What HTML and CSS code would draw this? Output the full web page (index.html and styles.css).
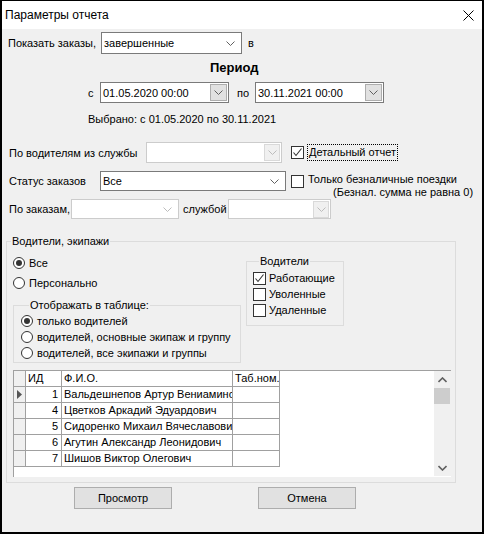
FILE: index.html
```html
<!DOCTYPE html>
<html lang="ru">
<head>
    <meta charset="UTF-8">
    <title>Параметры отчета</title>
    <link rel="stylesheet" href="styles.css">
</head>
<body>

<div class="window">
    <div class="titlebar">
        <span>Параметры отчета</span>
        <svg class="close" width="11" height="11" viewBox="0 0 11 11">
            <path d="M0.5 0.5 L10.5 10.5 M10.5 0.5 L0.5 10.5" stroke="#000" stroke-width="1"/>
        </svg>
    </div>

    <div class="content">
        <div class="row row-show">
            <span class="lbl w-show">Показать заказы,</span>
            <div class="combo w-status-main">
                <span>завершенные</span>
                <svg class="chev" width="9" height="5" viewBox="0 0 9 5"><path d="M0.5 0.5 L4.5 4.5 L8.5 0.5" fill="none" stroke="#606060"/></svg>
            </div>
            <span class="lbl after-combo">в</span>
        </div>

        <div class="period-title">Период</div>

        <div class="row row-dates">
            <span class="lbl w-from">с</span>
            <div class="datepick">
                <span>01.05.2020 00:00</span>
                <span class="dbtn"><svg width="9" height="5" viewBox="0 0 9 5"><path d="M0.5 0.5 L4.5 4.5 L8.5 0.5" fill="none" stroke="#606060"/></svg></span>
            </div>
            <span class="lbl w-to">по</span>
            <div class="datepick">
                <span>30.11.2021 00:00</span>
                <span class="dbtn"><svg width="9" height="5" viewBox="0 0 9 5"><path d="M0.5 0.5 L4.5 4.5 L8.5 0.5" fill="none" stroke="#606060"/></svg></span>
            </div>
        </div>

        <div class="selected">Выбрано: с 01.05.2020 по 30.11.2021</div>

        <div class="row row-f1">
            <span class="lbl w-drivers">По водителям из службы</span>
            <div class="combo disabled w-service">
                <span></span>
                <span class="dbtn dis"><svg width="9" height="5" viewBox="0 0 9 5"><path d="M0.5 0.5 L4.5 4.5 L8.5 0.5" fill="none" stroke="#bcbcbc"/></svg></span>
            </div>
            <div class="check detail">
                <span class="box"><svg width="11" height="11" viewBox="0 0 11 11"><path d="M1.5 5.5 L4 8.5 L9.5 1.5" fill="none" stroke="#333" stroke-width="1.1"/></svg></span>
                <span class="focus">Детальный отчет</span>
            </div>
        </div>

        <div class="row row-f2">
            <span class="lbl w-status">Статус заказов</span>
            <div class="combo w-status">
                <span>Все</span>
                <svg class="chev" width="9" height="5" viewBox="0 0 9 5"><path d="M0.5 0.5 L4.5 4.5 L8.5 0.5" fill="none" stroke="#606060"/></svg>
            </div>
            <div class="check cashless">
                <span class="box"></span>
                <div class="check-text">
                    <div>Только безналичные поездки</div>
                    <div class="note">(Безнал. сумма не равна 0)</div>
                </div>
            </div>
        </div>

        <div class="row row-f3">
            <span class="lbl w-orders">По заказам,</span>
            <div class="combo disabled w-orders-combo">
                <span></span>
                <svg class="chev" width="9" height="5" viewBox="0 0 9 5"><path d="M0.5 0.5 L4.5 4.5 L8.5 0.5" fill="none" stroke="#bcbcbc"/></svg>
            </div>
            <span class="lbl w-by">службой</span>
            <div class="combo disabled w-by-combo">
                <span></span>
                <span class="dbtn dis"><svg width="9" height="5" viewBox="0 0 9 5"><path d="M0.5 0.5 L4.5 4.5 L8.5 0.5" fill="none" stroke="#bcbcbc"/></svg></span>
            </div>
        </div>

        <fieldset class="group main-group">
            <legend>Водители, экипажи</legend>

            <div class="group-top">
                <div class="left-col">
                    <div class="radio-row first"><span class="radio on"></span>Все</div>
                    <div class="radio-row"><span class="radio"></span>Персонально</div>

                    <fieldset class="group show-group">
                        <legend>Отображать в таблице:</legend>
                        <div class="radio-row"><span class="radio on"></span>только водителей</div>
                        <div class="radio-row"><span class="radio"></span>водителей, основные экипаж и группу</div>
                        <div class="radio-row"><span class="radio"></span>водителей, все экипажи и группы</div>
                    </fieldset>
                </div>

                <fieldset class="group drivers-group">
                    <legend>Водители</legend>
                    <div class="check-row"><span class="box"><svg width="11" height="11" viewBox="0 0 11 11"><path d="M1.5 5.5 L4 8.5 L9.5 1.5" fill="none" stroke="#333" stroke-width="1.1"/></svg></span>Работающие</div>
                    <div class="check-row"><span class="box"></span>Уволенные</div>
                    <div class="check-row"><span class="box"></span>Удаленные</div>
                </fieldset>
            </div>

            <div class="grid">
                <div class="grid-body">
                    <div class="grid-row head">
                        <div class="cell ind"></div>
                        <div class="cell">ИД</div>
                        <div class="cell">Ф.И.О.</div>
                        <div class="cell">Таб.ном.</div>
                    </div>
                    <div class="grid-row">
                        <div class="cell ind"><svg width="5" height="9" viewBox="0 0 5 9"><path d="M0 0 L5 4.5 L0 9 Z" fill="#555"/></svg></div>
                        <div class="cell num">1</div>
                        <div class="cell">Вальдешнепов Артур Вениаминович</div>
                        <div class="cell"></div>
                    </div>
                    <div class="grid-row">
                        <div class="cell ind"></div>
                        <div class="cell num">4</div>
                        <div class="cell">Цветков Аркадий Эдуардович</div>
                        <div class="cell"></div>
                    </div>
                    <div class="grid-row">
                        <div class="cell ind"></div>
                        <div class="cell num">5</div>
                        <div class="cell">Сидоренко Михаил Вячеславович</div>
                        <div class="cell"></div>
                    </div>
                    <div class="grid-row">
                        <div class="cell ind"></div>
                        <div class="cell num">6</div>
                        <div class="cell">Агутин Александр Леонидович</div>
                        <div class="cell"></div>
                    </div>
                    <div class="grid-row">
                        <div class="cell ind"></div>
                        <div class="cell num">7</div>
                        <div class="cell">Шишов Виктор Олегович</div>
                        <div class="cell"></div>
                    </div>
                </div>
                <div class="scrollbar">
                    <span class="sb-arrow"><svg width="9" height="6" viewBox="0 0 9 6"><path d="M0.5 5 L4.5 1 L8.5 5" fill="none" stroke="#606060" stroke-width="1.6"/></svg></span>
                    <span class="sb-thumb"></span>
                    <span class="sb-space"></span>
                    <span class="sb-arrow"><svg width="9" height="6" viewBox="0 0 9 6"><path d="M0.5 1 L4.5 5 L8.5 1" fill="none" stroke="#606060" stroke-width="1.6"/></svg></span>
                </div>
            </div>
        </fieldset>

        <div class="buttons">
            <button class="btn view">Просмотр</button>
            <button class="btn cancel">Отмена</button>
        </div>
    </div>
</div>

</body>
</html>
```

FILE: styles.css
```css
* {
    box-sizing: border-box;
}

body {
    margin: 0;
    background-color: #000;
    font-family: "Liberation Sans", Arial, sans-serif;
    font-size: 11px;
    color: #000;
}

.window {
    margin: 1px 2px 2px 2px;
    height: 531px;
    background-color: #f0f0f0;
}

.titlebar {
    height: 28px;
    background-color: #fff;
    display: flex;
    align-items: center;
    justify-content: space-between;
    padding: 0 8px 0 3px;
    font-size: 12px;
}

/* строки формы */
.row {
    display: flex;
    align-items: center;
}

.lbl {
    white-space: nowrap;
    flex-shrink: 0;
}

.row-show {
    height: 22px;
    margin-top: 3px;
    padding-left: 6px;
}

.w-show { width: 93px; }
.after-combo { margin-left: 6px; }

.combo {
    height: 100%;
    display: flex;
    align-items: center;
    justify-content: space-between;
    background-color: #fff;
    border: 1px solid #7a7a7a;
    padding: 0 6px 0 2px;
    flex-shrink: 0;
}

.combo.disabled {
    border-color: #cccccc;
    padding-right: 1px;
}

.w-orders-combo.disabled {
    padding-right: 6px;
}

.w-status-main { width: 141px; }

.period-title {
    margin-top: 6px;
    height: 16px;
    line-height: 16px;
    padding-left: 208px;
    font-weight: bold;
    font-size: 13px;
}

.row-dates {
    height: 21px;
    margin-top: 6px;
}

.w-from {
    width: 12px;
    margin-left: 86px;
}

.w-to {
    width: 18px;
    margin-left: 8px;
}

.datepick {
    width: 129px;
    height: 21px;
    display: flex;
    align-items: center;
    justify-content: space-between;
    background-color: #fff;
    border: 1px solid #7a7a7a;
    padding-left: 2px;
    padding-right: 1px;
}

.dbtn {
    width: 17px;
    height: 17px;
    display: flex;
    align-items: center;
    justify-content: center;
    background-color: #e1e1e1;
    border: 1px solid #adadad;
}

.dbtn.dis {
    background-color: #f0f0f0;
    border-color: #d9d9d9;
    width: 16px;
}

.selected {
    margin-top: 8px;
    height: 16px;
    line-height: 16px;
    padding-left: 86px;
}

.row-f1 {
    height: 21px;
    margin-top: 15px;
    padding-left: 7px;
}

.w-drivers { width: 137px; }
.w-service { width: 136px; }

.check {
    display: flex;
    align-items: center;
    margin-left: 9px;
}

.box {
    width: 13px;
    height: 13px;
    border: 1px solid #333;
    background-color: #fff;
    display: inline-flex;
    align-items: center;
    justify-content: center;
    flex-shrink: 0;
}

.focus {
    margin-left: 3px;
    padding: 1px 1px 2px 1px;
    border: 1px dotted #000;
    white-space: nowrap;
}

.row-f2 {
    height: 20px;
    margin-top: 8px;
    padding-left: 7px;
    align-items: flex-start;
}

.w-status {
    width: 186px;
}

.row-f2 .lbl {
    width: 91px;
    line-height: 20px;
}

.check.cashless {
    margin-left: 5px;
    margin-top: 2px;
    align-items: flex-start;
}

.cashless .box {
    margin-top: 2px;
}

.check-text {
    margin-left: 4px;
    line-height: 13px;
    white-space: nowrap;
}

.note {
    padding-left: 25px;
}

.row-f3 {
    height: 20px;
    margin-top: 8px;
    padding-left: 7px;
}

.w-orders { width: 62px; }
.w-orders-combo { width: 108px; }
.w-by { width: 45px; margin-left: 4px; }
.w-by-combo { width: 103px; }

/* группы */
.group {
    border: 1px solid #dcdcdc;
    margin: 0;
    padding: 0;
    min-width: 0;
}

.group legend {
    padding: 0 1px;
    line-height: 14px;
    white-space: nowrap;
}

.main-group {
    margin: 15px 0 4px 4px;
    width: 450px;
    padding-bottom: 5px;
}

.main-group > legend {
    margin-left: 4px;
}

.group-top {
    display: flex;
    align-items: flex-start;
}

.left-col {
    width: 234px;
    padding-left: 6px;
    flex-shrink: 0;
}

.radio-row {
    height: 16px;
    display: flex;
    align-items: center;
    white-space: nowrap;
}

.radio-row.first {
    margin-top: 7px;
}

.radio-row + .radio-row {
    margin-top: 4px;
}

.radio {
    width: 12px;
    height: 12px;
    border: 1px solid #333;
    border-radius: 50%;
    background-color: #fff;
    margin-right: 4px;
    display: inline-flex;
    align-items: center;
    justify-content: center;
    flex-shrink: 0;
}

.radio.on::after {
    content: "";
    width: 6px;
    height: 6px;
    border-radius: 50%;
    background-color: #333;
}

.show-group {
    width: 228px;
    margin-top: 7px;
    padding: 1px 0 1px 7px;
}

.show-group legend {
    margin-left: 8px;
}

.show-group .radio-row + .radio-row {
    margin-top: 0;
}

.drivers-group {
    width: 98px;
    margin-top: 6px;
    margin-left: 5px;
    padding: 2px 0 7px 6px;
}

.drivers-group legend {
    margin-left: 6px;
}

.check-row {
    height: 16px;
    display: flex;
    align-items: center;
    white-space: nowrap;
}

.check-row .box {
    margin-right: 3px;
}

/* таблица водителей */
.grid {
    display: flex;
    margin: 7px 0 0 6px;
    width: 438px;
    height: 107px;
    background-color: #fff;
    border-top: 1px solid #a0a0a0;
    border-left: 1px solid #a0a0a0;
}

.grid-body {
    flex: 1;
    overflow: hidden;
}

.grid-row {
    display: grid;
    grid-template-columns: 12px 36px 171px 47px;
    height: 16px;
}

.cell {
    border-right: 1px solid #a0a0a0;
    border-bottom: 1px solid #a0a0a0;
    padding-left: 2px;
    line-height: 15px;
    white-space: nowrap;
    overflow: hidden;
}

.cell.ind {
    background-color: #f0f0f0;
    padding-left: 3px;
    display: flex;
    align-items: center;
}

.cell.num {
    text-align: right;
    padding-right: 3px;
}

.scrollbar {
    width: 17px;
    background-color: #f0f0f0;
    display: flex;
    flex-direction: column;
    margin-bottom: 1px;
}

.sb-arrow {
    height: 17px;
    display: flex;
    align-items: center;
    justify-content: center;
}

.sb-thumb {
    height: 16px;
    margin: 0 1px 0 0;
    background-color: #cdcdcd;
}

.sb-space {
    flex: 1;
}

/* кнопки */
.buttons {
    display: flex;
    padding-left: 72px;
    gap: 86px;
}

.btn {
    width: 98px;
    height: 22px;
    background-color: #e1e1e1;
    border: 1px solid #adadad;
    font-family: "Liberation Sans", Arial, sans-serif;
    font-size: 11px;
    color: #000;
    padding: 0;
}
```
